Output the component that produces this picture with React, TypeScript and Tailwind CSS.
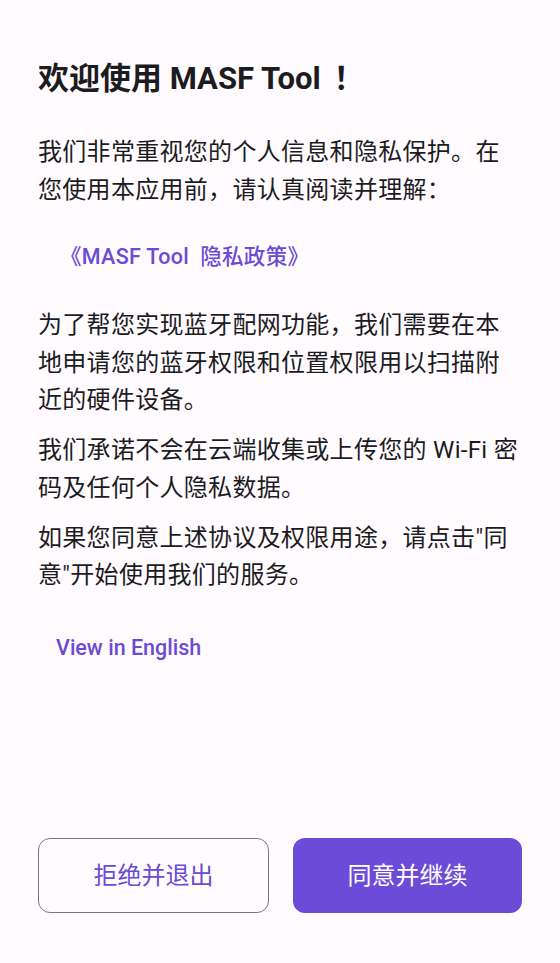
import React from "react";

export default function App() {
  return (
    <div
      className="w-[560px] h-[963px] bg-[#fffbfe] flex flex-col px-[38px] text-[#1c1b1f]"
      style={{ fontFamily: 'Roboto, "Noto Sans CJK SC", sans-serif' }}
    >
      <h1 className="mt-[56px] text-[31px] leading-[40px] font-bold">
        欢迎使用 MASF Tool
        <span
          className="ml-[5px]"
          style={{ fontFamily: '"Noto Sans CJK JP", sans-serif' }}
        >
          ！
        </span>
      </h1>

      <p className="mt-[35px] text-[24px] leading-[37.5px] tracking-[0.3px]">
        我们非常重视您的个人信息和隐私保护。在
        <br />
        您使用本应用前，请认真阅读并理解：
      </p>

      <div className="mt-[18px] mb-[20px] h-[60px] flex items-center">
        <button className="h-full pl-[22px] pr-[18px] text-[21.5px] font-medium tracking-[0.3px] text-[#6a4bd6]">
          《MASF Tool{"\u2002"}隐私政策》
        </button>
      </div>

      <div className="flex flex-col gap-[12.5px] text-[24px] leading-[37.5px] tracking-[0.3px]">
        <p>
          为了帮您实现蓝牙配网功能，我们需要在本
          <br />
          地申请您的蓝牙权限和位置权限用以扫描附
          <br />
          近的硬件设备。
        </p>
        <p>
          我们承诺不会在云端收集或上传您的 Wi-Fi 密
          <br />
          码及任何个人隐私数据。
        </p>
        <p>
          如果您同意上述协议及权限用途，请点击"同
          <br />
          意"开始使用我们的服务。
        </p>
      </div>

      <div className="mt-[23.5px] h-[60px] flex items-center">
        <button className="h-full px-[18px] text-[21.5px] font-medium text-[#6a4bd6]">
          View in English
        </button>
      </div>

      <div className="mt-auto mb-[50px] flex gap-[24px]">
        <button className="flex-1 h-[75px] rounded-[12px] border-[1.5px] border-[#79747e] text-[#6a4bd6] text-[24px]">
          拒绝并退出
        </button>
        <button className="flex-1 h-[75px] rounded-[12px] bg-[#6b4bd8] text-white text-[24px]">
          同意并继续
        </button>
      </div>
    </div>
  );
}
